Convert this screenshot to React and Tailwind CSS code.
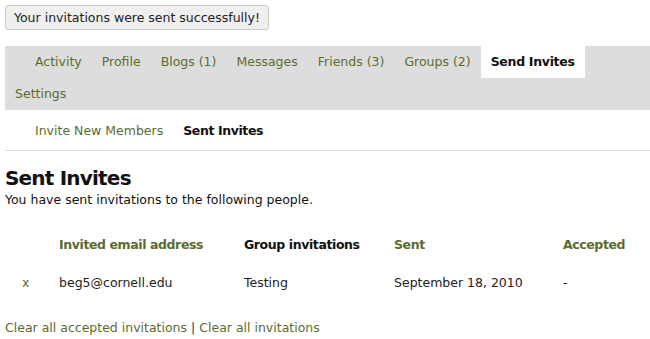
const tabs = ['Activity', 'Profile', 'Blogs (1)', 'Messages', 'Friends (3)', 'Groups (2)'];

export default function App() {
  return (
    <div className="min-h-screen bg-white pl-[5px] pt-[5px] text-[12.5px] text-[#222] font-['DejaVu_Sans',Verdana,sans-serif]">
      {/* flash message */}
      <div className="inline-block h-[25px] px-[8px] leading-[23px] border border-[#c9c9c9] bg-[#efefef] rounded-[3px] text-[#222]">
        Your invitations were sent successfully!
      </div>

      {/* main nav */}
      <ul className="mt-[16px] flex flex-wrap bg-[#dddddd] pl-0">
        {tabs.map((t, i) => (
          <li key={t} className={i === 0 ? 'ml-[20px]' : ''}>
            <a className="block px-[10px] leading-[32px] text-[#5b6b2f]">{t}</a>
          </li>
        ))}
        <li className="bg-white">
          <a className="block px-[10px] leading-[32px] font-bold tracking-[-0.3px] text-[#111]">Send Invites</a>
        </li>
        <li className="basis-full h-0"></li>
        <li>
          <a className="block px-[10px] leading-[32px] text-[#5b6b2f]">Settings</a>
        </li>
      </ul>

      {/* sub nav */}
      <ul className="flex pl-[20px] pt-[5px] pb-[3px] border-b border-[#dddddd]">
        <li><a className="block px-[10px] leading-[32px] text-[#5b6b2f]">Invite New Members</a></li>
        <li><a className="block px-[10px] leading-[32px] font-bold tracking-[-0.4px] text-[#111]">Sent Invites</a></li>
      </ul>

      <h2 className="mt-[15px] text-[20px] leading-[24px] font-bold tracking-[-0.8px] text-[#111]">Sent Invites</h2>
      <p className="mt-[2px] leading-[16px] text-[#111]">You have sent invitations to the following people.</p>

      {/* invites table */}
      <div className="mt-[18px] grid grid-cols-[44px_185px_150px_169px_1fr]">
        <div className="h-[38px]"></div>
        <div className="pl-[10px] leading-[38px] font-bold tracking-[-0.4px] text-[#5b6b2f]">Invited email address</div>
        <div className="pl-[10px] leading-[38px] font-bold tracking-[-0.4px] text-[#111]">Group invitations</div>
        <div className="pl-[10px] leading-[38px] font-bold tracking-[-0.4px] text-[#5b6b2f]">Sent</div>
        <div className="pl-[10px] leading-[38px] font-bold tracking-[-0.4px] text-[#5b6b2f]">Accepted</div>

        <div className="pl-[17px] leading-[38px] text-[#5b6b2f]">x</div>
        <div className="pl-[10px] leading-[38px]">beg5@cornell.edu</div>
        <div className="pl-[10px] leading-[38px]">Testing</div>
        <div className="pl-[10px] leading-[38px]">September 18, 2010</div>
        <div className="pl-[10px] leading-[38px]">-</div>
      </div>

      <p className="mt-[18px] leading-[16px]">
        <a className="text-[#5b6b2f]">Clear all accepted invitations</a>
        <span className="text-[#4b1f4f]"> | </span>
        <a className="text-[#5b6b2f]">Clear all invitations</a>
      </p>
    </div>
  );
}
